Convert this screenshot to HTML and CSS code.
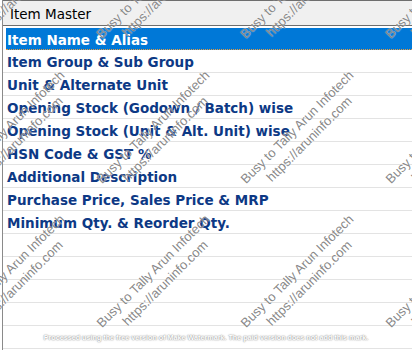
FILE: index.html
```html
<!DOCTYPE html>
<html>
<head>
<meta charset="utf-8">
<link rel="stylesheet" href="styles.css">
</head>
<body>
<div class="page">
  <div class="panel">
    <div class="header">Item Master</div>
    <ul class="list">
      <li class="row selected">Item Name &amp; Alias</li>
      <li class="row">Item Group &amp; Sub Group</li>
      <li class="row">Unit &amp; Alternate Unit</li>
      <li class="row">Opening Stock (Godown / Batch) wise</li>
      <li class="row">Opening Stock (Unit &amp; Alt. Unit) wise</li>
      <li class="row">HSN Code &amp; GST %</li>
      <li class="row">Additional Description</li>
      <li class="row">Purchase Price, Sales Price &amp; MRP</li>
      <li class="row">Minimum Qty. &amp; Reorder Qty.</li>
      <li class="row"></li>
      <li class="row"></li>
      <li class="row"></li>
      <li class="row"></li>
      <li class="row"></li>
    </ul>
  </div>
  <div class="marks">
    <div class="mark" style="left:14px;top:-12px">Busy to Tally Arun Infotech<br>https://aruninfo.com</div>
    <div class="mark" style="left:159px;top:-12px">Busy to Tally Arun Infotech<br>https://aruninfo.com</div>
    <div class="mark" style="left:303px;top:-12px">Busy to Tally Arun Infotech<br>https://aruninfo.com</div>
    <div class="mark" style="left:448px;top:-12px">Busy to Tally Arun Infotech<br>https://aruninfo.com</div>
    <div class="mark" style="left:14px;top:133px">Busy to Tally Arun Infotech<br>https://aruninfo.com</div>
    <div class="mark" style="left:159px;top:133px">Busy to Tally Arun Infotech<br>https://aruninfo.com</div>
    <div class="mark" style="left:303px;top:133px">Busy to Tally Arun Infotech<br>https://aruninfo.com</div>
    <div class="mark" style="left:448px;top:133px">Busy to Tally Arun Infotech<br>https://aruninfo.com</div>
    <div class="mark" style="left:14px;top:277px">Busy to Tally Arun Infotech<br>https://aruninfo.com</div>
    <div class="mark" style="left:159px;top:277px">Busy to Tally Arun Infotech<br>https://aruninfo.com</div>
    <div class="mark" style="left:303px;top:277px">Busy to Tally Arun Infotech<br>https://aruninfo.com</div>
    <div class="mark" style="left:448px;top:277px">Busy to Tally Arun Infotech<br>https://aruninfo.com</div>
  </div>
  <div class="notice">Processed using the free version of Make Watermark. The paid version does not add this mark.</div>
</div>
</body>
</html>
```
FILE: styles.css
```css
html, body {
  margin: 0;
  padding: 0;
  background: #ffffff;
}
.page {
  position: relative;
  width: 412px;
  height: 350px;
  overflow: hidden;
  padding-left: 2px;
  box-sizing: border-box;
}
.panel {
  border-left: 1px solid #8a8a8a;
  height: 350px;
}
.header {
  border-top: 1px solid #6e6e6e;
  border-bottom: 1px solid #6e6e6e;
  background: #f0f0f0;
  font-family: "DejaVu Sans", sans-serif;
  font-size: 13.5px;
  line-height: 24px;
  padding-left: 7px;
  padding-top: 1px;
  height: 23px;
  color: #000;
}
.list {
  list-style: none;
  margin: 0;
  padding: 0;
  padding-top: 1px;
}
.row {
  height: 19px;
  padding-top: 3px;
  line-height: 19px;
  border-bottom: 1px solid #e3e3e3;
  padding-left: 4px;
  font-family: "DejaVu Sans", sans-serif;
  font-weight: bold;
  font-size: 13.5px;
  color: #0d3985;
  white-space: nowrap;
}
.row.selected {
  margin-left: 3px;
  padding-left: 1px;
  height: 18px;
  margin-top: 1px;
  background: #0078d7;
  color: #ffffff;
  border-bottom: 1px dotted #e89a3c;
}
.marks {
  position: absolute;
  inset: 0;
  pointer-events: none;
}
.mark {
  position: absolute;
  transform: translate(-50%, -50%) rotate(-45deg);
  font-family: "Liberation Sans", Arial, sans-serif;
  font-size: 13px;
  line-height: 17px;
  text-align: center;
  white-space: nowrap;
  color: rgba(105, 105, 105, 0.8);
  text-shadow: 0 0 1px #ffffff;
}
.notice {
  position: absolute;
  left: 0;
  right: 0;
  top: 333px;
  text-align: center;
  font-family: "Liberation Sans", Arial, sans-serif;
  font-weight: bold;
  font-size: 7.2px;
  line-height: 10px;
  color: #ffffff;
  text-shadow: 0 0 1px #8a8a8a, 0 0 2px #a0a0a0;
  white-space: nowrap;
}
```
